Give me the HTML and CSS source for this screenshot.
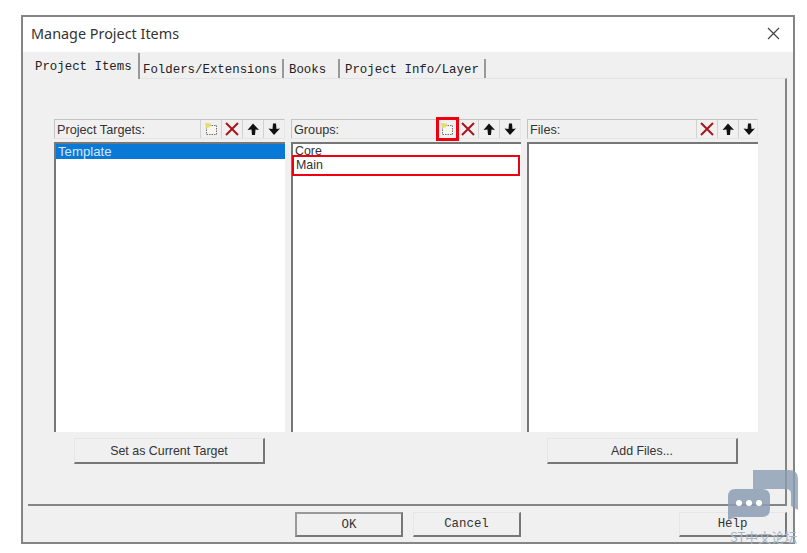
FILE: index.html
```html
<!DOCTYPE html>
<html lang="en">
<head>
<meta charset="utf-8">
<title>Manage Project Items</title>
<link rel="stylesheet" href="styles.css">
</head>
<body>
<div class="dialog">
  <div class="titlebar">
    <span class="title">Manage Project Items</span>
    <svg class="close" width="13" height="13" viewBox="0 0 13 13"><path d="M1 1L12 12M12 1L1 12" stroke="#444" stroke-width="1.2" fill="none"/></svg>
  </div>
  <div class="body">
    <div class="tabs">
      <span class="tab tab-active">Project Items</span>
      <span class="tab tab-folders">Folders/Extensions</span>
      <span class="tab tab-books">Books</span>
      <span class="tab tab-info">Project Info/Layer</span>
    </div>
    <div class="page">
      <div class="panels">
        <section class="panel">
          <div class="head">
            <span class="label">Project Targets:</span>
            <span class="tool"><svg width="14" height="14" viewBox="0 0 14 14"><use href="#i-new"/></svg></span>
            <span class="tool"><svg width="14" height="14" viewBox="0 0 14 14"><use href="#i-del"/></svg></span>
            <span class="tool"><svg width="14" height="14" viewBox="0 0 14 14"><use href="#i-up"/></svg></span>
            <span class="tool"><svg width="14" height="14" viewBox="0 0 14 14"><use href="#i-down"/></svg></span>
          </div>
          <div class="list">
            <div class="row row-selected">Template</div>
          </div>
          <div class="action"><button class="btn btn-sans">Set as Current Target</button></div>
        </section>
        <section class="panel">
          <div class="head">
            <span class="label">Groups:</span>
            <span class="tool tool-marked"><svg width="14" height="14" viewBox="0 0 14 14"><use href="#i-new"/></svg></span>
            <span class="tool"><svg width="14" height="14" viewBox="0 0 14 14"><use href="#i-del"/></svg></span>
            <span class="tool"><svg width="14" height="14" viewBox="0 0 14 14"><use href="#i-up"/></svg></span>
            <span class="tool"><svg width="14" height="14" viewBox="0 0 14 14"><use href="#i-down"/></svg></span>
          </div>
          <div class="list">
            <div class="row">Core</div>
            <div class="row row-marked">Main</div>
          </div>
        </section>
        <section class="panel">
          <div class="head head-files">
            <span class="label">Files:</span>
            <span class="tool"><svg width="14" height="14" viewBox="0 0 14 14"><use href="#i-del"/></svg></span>
            <span class="tool"><svg width="14" height="14" viewBox="0 0 14 14"><use href="#i-up"/></svg></span>
            <span class="tool"><svg width="14" height="14" viewBox="0 0 14 14"><use href="#i-down"/></svg></span>
          </div>
          <div class="list"></div>
          <div class="action"><button class="btn btn-sans">Add Files...</button></div>
        </section>
      </div>
    </div>
    <div class="footer">
      <button class="btn btn-mono btn-default">OK</button>
      <button class="btn btn-mono">Cancel</button>
      <button class="btn btn-mono btn-help">Help</button>
    </div>
  </div>
</div>
<div class="watermark">
  <svg width="72" height="50" viewBox="0 0 72 50"><path d="M26 0H62Q71 0 71 9V40L64 36V24Q64 19 59 19H26Z" fill="#8b9db3" fill-opacity=".8"/><path d="M8 19H35Q43 19 43 27V39Q43 47 35 47H9L1 50V27Q1 19 8 19Z" fill="#8b9db3" fill-opacity=".85"/><circle cx="12" cy="33" r="3" fill="#fff"/><circle cx="22" cy="33" r="3" fill="#fff"/><circle cx="32" cy="33" r="3" fill="#fff"/></svg>
  <span class="wm-text">ST中文论坛</span>
</div>
<svg class="defs" width="0" height="0">
  <defs>
    <g id="i-new"><rect x="2.5" y="3.5" width="10" height="9" fill="#f6f6ee" stroke="#6f6f6f" stroke-dasharray="1.5 1"/><path d="M1 1L7 1.5L6 5L2 6Z" fill="#e6dc6a"/></g>
    <g id="i-del"><path d="M1 1L13 13M13 1L1 13" stroke="#a8161c" stroke-width="2" fill="none"/></g>
    <g id="i-up"><path d="M7 1.5L13 8L9.5 7.5L9 13H6L5.5 7.5L1.5 8Z" fill="#111"/></g>
    <g id="i-down"><path d="M7 13L13 6.5L9.5 7L9 1.5H6L5.5 7L1.5 6.5Z" fill="#111"/></g>
  </defs>
</svg>
</body>
</html>
```
FILE: styles.css
```css
html, body { margin: 0; padding: 0; background: #fff; }
body { width: 807px; height: 553px; overflow: hidden; position: relative; font-family: "Liberation Sans", Arial, sans-serif; }
.defs { position: absolute; }
.dialog {
  box-sizing: border-box;
  width: 774px; height: 529px;
  margin: 15px 0 0 21px;
  border: 2px solid #858585;
  display: flex; flex-direction: column;
  background: #f0f0f0;
}
.titlebar {
  height: 35px; flex: none; box-sizing: border-box;
  background: #fff;
  display: flex; align-items: center; justify-content: space-between;
  padding: 0 13px 2px 8px;
}
.title { font: 14.4px "Noto Sans", sans-serif; color: #333; }
.body { flex: 1; display: flex; flex-direction: column; min-height: 0; }
.tabs {
  height: 26px; flex: none;
  padding-left: 5px;
  display: flex; align-items: flex-end;
  font: 12.4px "Liberation Mono", monospace; color: #222;
}
.tab { display: block; box-sizing: border-box; height: 19px; line-height: 22px; border-right: 2px solid #999; white-space: pre; }
.tab-active { width: 112px; height: 26px; line-height: 29px; padding-left: 7px; background: #f0f0f0; position: relative; top: 1px; }
.tab-folders { width: 144px; padding-left: 3px; }
.tab-books { width: 56px; padding-left: 5px; }
.tab-info { width: 146px; padding-left: 5px; }
.page {
  flex: 1; min-height: 0;
  margin-left: 5px; margin-right: 6px;
  border-top: 1px solid #e4e4e4;
  border-right: 2px solid #858585;
  border-bottom: 2px solid #858585;
  padding: 40px 27px 0 26px;
  box-sizing: border-box;
}
.panels { display: grid; grid-template-columns: 231px 230px 231px; column-gap: 6px; }
.panel { display: flex; flex-direction: column; }
.head {
  box-sizing: border-box;
  height: 20px;
  border: 1px solid #c4c4c4;
  border-right-color: #e6e6e6; border-bottom-color: #e6e6e6;
  display: flex; align-items: center;
  font-size: 12.7px; color: #333;
}
.label { flex: 1; padding: 2px 0 0 2px; }
.tool {
  box-sizing: border-box;
  width: 21px; height: 18px;
  display: flex; align-items: center; justify-content: center;
  border-left: 1px solid #d2d2d2;
}
.head-files .tool:last-child { margin-right: -2px; }
.tool-marked { position: relative; border-left: none; }
.tool-marked::after {
  content: "";
  position: absolute;
  inset: -3px -2px -3px 0;
  border: 3px solid #ee0011;
}
.list {
  box-sizing: border-box;
  height: 290px; margin-top: 3px;
  background: #fff;
  border-top: 2px solid #777; border-left: 2px solid #777;
  font-size: 12.4px; color: #333;
}
.row { height: 14px; line-height: 14px; padding-left: 2px; }
.row-selected { height: 15px; line-height: 16px; background: #0a78d7; color: #d6e8f8; font-size: 13.2px; }
.row-marked {
  box-sizing: border-box;
  height: 21px; line-height: 17px;
  margin-left: -1px; margin-right: 1px;
  border: 2px solid #ee0011;
  padding-left: 2px;
  margin-top: -3px;
}
.action { display: flex; justify-content: center; margin-top: 6px; }
.btn {
  box-sizing: border-box;
  width: 191px; height: 26px;
  padding: 0;
  background: #f0f0f0;
  border: 1px solid #e6e6e6;
  border-right: 2px solid #777; border-bottom: 2px solid #777;
  color: #333;
}
.btn-sans { font: 12.4px "Liberation Sans", sans-serif; }
.btn-mono { width: 108px; height: 25px; font: 12.4px "Liberation Mono", monospace; }
.btn-default { border: 2px solid #777; border-left-color: #999; border-top-color: #999; }
.footer {
  flex: none; height: 36px; box-sizing: border-box;
  display: flex; align-items: flex-start;
  padding: 6px 0 0 272px;
  gap: 10px;
}
.btn-help { margin-left: 148px; }
.watermark { position: absolute; left: 727px; top: 470px; width: 80px; height: 83px; }
.watermark svg { display: block; }
.wm-text { position: absolute; left: 3px; top: 57px; font: 13px "Noto Sans CJK SC", "Liberation Sans", sans-serif; color: #a6b6c8; white-space: nowrap; }
```
